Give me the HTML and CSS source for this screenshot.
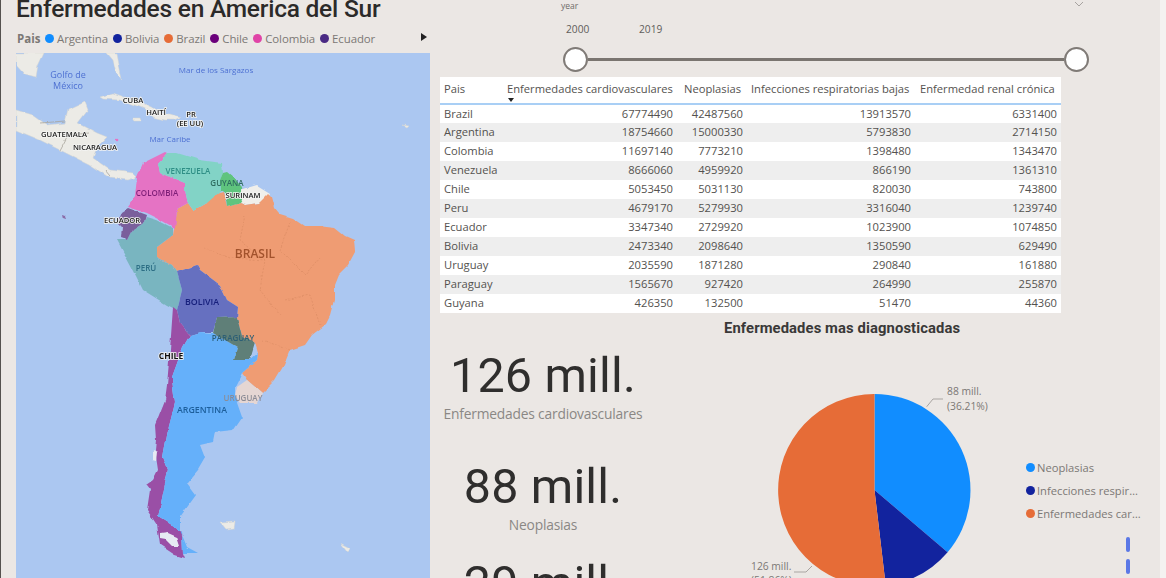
FILE: index.html
```html
<!DOCTYPE html>
<html lang="es">
<head>
<meta charset="utf-8">
<title>Enfermedades en America del Sur</title>
<link rel="stylesheet" href="styles.css">
</head>
<body>
<div class="report">
  <section class="left">
    <h1 class="title">Enfermedades en America del Sur</h1>
    <div class="map-legend">
      <b class="ml-head">Pais</b>
      <span class="ml-item"><i class="dot c-arg"></i>Argentina</span>
      <span class="ml-item"><i class="dot c-bol"></i>Bolivia</span>
      <span class="ml-item"><i class="dot c-bra"></i>Brazil</span>
      <span class="ml-item"><i class="dot c-chi"></i>Chile</span>
      <span class="ml-item"><i class="dot c-col"></i>Colombia</span>
      <span class="ml-item"><i class="dot c-ecu"></i>Ecuador</span>
      <i class="ml-next"></i>
    </div>
    <svg class="map" viewBox="16 53 414 525" xmlns="http://www.w3.org/2000/svg">
      <defs>
        <filter id="rough" x="0" y="0" width="100%" height="100%">
          <feTurbulence type="fractalNoise" baseFrequency="0.07" numOctaves="3" seed="4" result="n"/>
          <feDisplacementMap in="SourceGraphic" in2="n" scale="4" xChannelSelector="R" yChannelSelector="G"/>
        </filter>
      </defs>
      <rect x="16" y="53" width="414" height="525" class="sea"/>
      <g class="terrain">
      <rect x="16" y="53" width="414" height="525" class="sea"/>
      <g class="land">
        <polygon points="16,53 44,53 38,66 36,78 25,75 16,65"/>
        <polygon points="107,53 117,53 122,80 116,72 113,60"/>
        <polygon points="16,110 33,115 47,125 65,123 68,110 85,102 88,110 78,123 97,133 107,137 97,147 93,158 110,170 133,173 137,177 128,180 110,178 90,165 60,150 40,140 16,130"/>
        <polygon points="100,97 113,93 133,100 150,108 163,113 157,115 140,107 120,100 103,99"/>
        <polygon points="150,113 163,112 180,117 173,120 165,120 152,117"/>
        <polygon points="133,118 141,118 142,121 135,121"/>
        <polygon points="403,125 410,126 408,128"/>
        <polygon points="221,523 236,522 235,528 226,529"/>
        <polygon points="340,543 350,548 348,553"/>
      </g>
      <circle cx="117" cy="140" r="1.3" class="f-col"/>
      <polygon class="f-gal" points="63,214 66,215 67,219 64,218"/>
      <polygon class="f-sur" points="240,190 257,185 270,193 268,197 258,203 245,205 240,203"/>
      <polygon class="f-bra" points="177,210 188,204 193,211 207,203 203,197 223,192 227,207 240,203 245,205 258,203 268,193 272,197 275,208 280,214 293,218 305,226 318,226 335,228 345,236 354,240 355,252 348,265 338,275 334,285 334,300 330,315 325,325 312,335 305,345 290,350 284,365 275,380 262,393 247,380 242,373 257,360 258,353 255,343 242,337 237,317 238,307 227,300 220,285 200,270 197,265 177,272 172,265 157,257 157,247 173,235 175,223"/>
      <polygon class="f-col" points="165,152 167,153 158,163 160,173 185,183 185,190 188,204 177,210 175,228 157,218 147,213 128,207 135,197 137,177 143,163"/>
      <polygon class="f-ven" points="158,163 167,153 177,153 200,160 222,163 223,173 220,180 222,190 207,203 193,211 188,204 185,190 185,183 160,173"/>
      <polygon class="f-guy" points="227,172 233,177 242,187 242,200 240,203 227,207 225,193 220,190 220,180 223,173"/>
      <polygon class="f-per" points="147,217 157,220 173,228 173,235 157,247 157,257 172,265 177,272 182,290 177,310 167,305 143,290 133,270 117,240 128,240 133,230 145,222"/>
      <polygon class="f-ecu" points="128,208 147,215 145,222 133,230 128,240 122,238 123,227 118,222 122,212"/>
      <polygon class="f-bol" points="197,265 200,270 220,285 227,300 238,307 237,317 217,318 213,332 200,332 190,335 180,323 177,310 182,290 177,272"/>
      <polygon class="f-chi" points="173,307 177,310 180,323 190,335 183,347 172,377 172,380 175,403 168,430 163,457 168,470 158,517 182,532 183,553 185,558 175,555 160,545 157,525 147,510 150,490 146,485 153,480 158,470 155,450 156,440 155,425 165,400 167,385 170,350"/>
      <polygon class="f-arg" points="190,335 200,332 213,333 237,347 233,360 250,360 258,353 257,360 242,373 235,387 235,397 242,417 233,430 215,432 213,442 200,445 205,458 198,470 187,483 196,495 180,517 180,530 187,547 198,553 183,553 182,532 158,517 168,470 163,457 168,430 175,403 172,380 172,377 183,347"/>
      <polygon class="f-par" points="217,318 237,317 242,337 255,343 250,360 233,360 237,347 213,333"/>
      <polygon class="f-uru" points="237,387 247,380 262,393 257,403 240,403 235,397"/>
      <polygon class="f-ice" points="153,450 157,452 156,461 152,460"/>
      <polygon class="f-ice" points="160,534 168,533 177,537 180,546 172,546 166,540 160,539"/>
      <path class="prov" d="M245 215l-5 25 25 20-5 30 20 25M290 222l-10 28 25 25 15-18M265 260l-35-2-25-10M285 300l25-5 10 30M262 340l28 10"/>
      <path class="coast" d="M40 123l25-2M60 150l8-15 20-2M105 170l5 6"/>
      </g>
      <g class="sea-label">
        <text x="68" y="78">Golfo de</text>
        <text x="68" y="89">México</text>
        <text x="216" y="73" class="s8">Mar de los Sargazos</text>
        <text x="170" y="142" class="s8">Mar Caribe</text>
      </g>
      <g class="place">
        <text x="133" y="103">CUBA</text>
        <text x="156" y="115">HAITÍ</text>
        <text x="191" y="117">PR</text>
        <text x="190" y="126">(EE UU)</text>
        <text x="64" y="137">GUATEMALA</text>
        <text x="95" y="150">NICARAGUA</text>
        <text x="122" y="223">ECUADOR</text>
        <text x="243" y="198">SURINAM</text>
        <text x="171" y="359" class="chile">CHILE</text>
      </g>
      <g class="tint">
        <text x="188" y="174" class="t-ven">VENEZUELA</text>
        <text x="227" y="186" class="t-guy">GUYANA</text>
        <text x="157" y="196" class="t-col">COLOMBIA</text>
        <text x="255" y="258" class="t-bra">BRASIL</text>
        <text x="146" y="271" class="t-per">PERÚ</text>
        <text x="202" y="305" class="t-bol">BOLIVIA</text>
        <text x="233" y="341" class="t-par">PARAGUAY</text>
        <text x="202" y="413" class="t-arg">ARGENTINA</text>
        <text x="243" y="401" class="t-uru">URUGUAY</text>
      </g>
    </svg>
  </section>

  <section class="right">
    <div class="slicer">
      <div class="slicer-head"><span class="slicer-name">year</span>
        <svg class="chev" viewBox="0 0 10 6"><polyline points="1,1 5,5 9,1"/></svg>
      </div>
      <div class="range"><span>2000</span><span>2019</span></div>
      <div class="slider"><i class="knob"></i><i class="rail"></i><i class="knob"></i></div>
    </div>

    <table class="grid-table">
      <colgroup><col class="k1"><col class="k2"><col class="k3"><col class="k4"><col class="k5"></colgroup>
      <thead>
        <tr><th>Pais</th><th class="sorted">Enfermedades cardiovasculares</th><th class="th-neo">Neoplasias</th><th>Infecciones respiratorias bajas</th><th class="th-renal">Enfermedad renal crónica</th></tr>
      </thead>
      <tbody>
        <tr><td>Brazil</td><td>67774490</td><td>42487560</td><td>13913570</td><td>6331400</td></tr>
        <tr><td>Argentina</td><td>18754660</td><td>15000330</td><td>5793830</td><td>2714150</td></tr>
        <tr><td>Colombia</td><td>11697140</td><td>7773210</td><td>1398480</td><td>1343470</td></tr>
        <tr><td>Venezuela</td><td>8666060</td><td>4959920</td><td>866190</td><td>1361310</td></tr>
        <tr><td>Chile</td><td>5053450</td><td>5031130</td><td>820030</td><td>743800</td></tr>
        <tr><td>Peru</td><td>4679170</td><td>5279930</td><td>3316040</td><td>1239740</td></tr>
        <tr><td>Ecuador</td><td>3347340</td><td>2729920</td><td>1023900</td><td>1074850</td></tr>
        <tr><td>Bolivia</td><td>2473340</td><td>2098640</td><td>1350590</td><td>629490</td></tr>
        <tr><td>Uruguay</td><td>2035590</td><td>1871280</td><td>290840</td><td>161880</td></tr>
        <tr><td>Paraguay</td><td>1565670</td><td>927420</td><td>264990</td><td>255870</td></tr>
        <tr><td>Guyana</td><td>426350</td><td>132500</td><td>51470</td><td>44360</td></tr>
      </tbody>
    </table>

    <div class="lower">
      <div class="cards">
        <div class="card"><div class="kpi">126 mill.</div><div class="kpi-label">Enfermedades cardiovasculares</div></div>
        <div class="card card-short"><div class="kpi">88 mill.</div><div class="kpi-label">Neoplasias</div></div>
        <div class="card"><div class="kpi">29 mill.</div><div class="kpi-label">Infecciones respiratorias bajas</div></div>
      </div>
      <div class="chart">
        <h2 class="chart-title">Enfermedades mas diagnosticadas</h2>
        <div class="chart-body">
          <svg class="pie" viewBox="745 340 280 238" xmlns="http://www.w3.org/2000/svg">
            <path class="s-blue" d="M874.5 490V394A96 96 0 0 1 947.6 552.2Z"/>
            <path class="s-navy" d="M874.5 490L947.6 552.2A96 96 0 0 1 885.7 585.3Z"/>
            <path class="s-orange" d="M874.5 490L885.7 585.3A96 96 0 1 1 874.5 394Z"/>
            <polyline class="leader" points="926.7,406.7 933,399 943,399"/>
            <polyline class="leader" points="794,572 806,572 812,566"/>
            <text class="pie-label" x="947" y="395">88 mill.</text>
            <text class="pie-label" x="947" y="410">(36.21%)</text>
            <text class="pie-label" x="751" y="570">126 mill.</text>
            <text class="pie-label" x="751" y="584">(51.86%)</text>
          </svg>
          <ul class="pie-legend">
            <li><i class="dot c-bra2"></i><span>Neoplasias</span></li>
            <li><i class="dot c-bol"></i><span>Infecciones respiratorias bajas</span></li>
            <li><i class="dot c-bra"></i><span>Enfermedades cardiovasculares</span></li>
          </ul>
          <div class="pager"><i></i><i></i></div>
        </div>
      </div>
    </div>
  </section>
</div>
</body>
</html>
```

FILE: styles.css
```css
* { box-sizing: border-box; }
html, body { margin: 0; height: 100%; overflow: hidden; }
body { background: #f4f2f1; font-family: "Open Sans", "Noto Sans", sans-serif; color: #605e5c; }

.report {
  width: 1160px;
  height: 578px;
  background: #ebe7e4;
  border-left: 1px solid #55514e;
  display: flex;
  overflow: hidden;
}

/* left */
.left { width: 414px; margin-left: 15px; flex: none; display: flex; flex-direction: column; }
.title {
  margin: 0;
  height: 21px;
  font: 500 24.5px/18px "Roboto", sans-serif;
  letter-spacing: -.23px;
  color: #2b2a29;
  white-space: nowrap;
}
.map-legend {
  display: flex;
  align-items: center;
  height: 32px;
  padding: 2px 0 0 1px;
  font-size: 11.45px;
  color: #7b7875;
  position: relative;
}
.ml-head { font: 700 11.5px "Open Sans", sans-serif; width: 28px; }
.ml-item { display: flex; align-items: center; margin-right: 5px; letter-spacing: -.1px; }
.ml-next {
  position: absolute;
  right: 3px;
  top: 12px;
  border-left: 6px solid #222;
  border-top: 4.5px solid transparent;
  border-bottom: 4.5px solid transparent;
}
.dot { display: inline-block; width: 9px; height: 9px; border-radius: 50%; margin-right: 3px; flex: none; }
.c-arg, .c-bra2 { background: #118dff; }
.c-bol { background: #12239e; }
.c-bra { background: #e66c37; }
.c-chi { background: #6b007b; }
.c-col { background: #e044a7; }
.c-ecu { background: #4a2a84; }

.map { display: block; width: 414px; height: 525px; filter: blur(.4px); }
.terrain { filter: url(#rough); }
.sea { fill: #abc7f1; }
.land polygon { fill: #ecebe6; stroke: #d8d6cf; stroke-width: .5; }
.f-bra { fill: #ef9c73; } .f-col { fill: #e573c4; } .f-ven { fill: #82d3c6; }
.f-guy { fill: #5fc47e; } .f-sur { fill: #f0efeb; } .f-per { fill: #79b5c0; }
.f-ecu { fill: #7a5f9c; } .f-bol { fill: #6670c0; } .f-par { fill: #5f7f78; }
.f-arg { fill: #65b0fa; } .f-chi { fill: #9a4fa6; } .f-uru { fill: #e5d6d3; }
.f-gal { fill: #8a6ca8; }
.f-ice { fill: #e6eaf3; }
.prov { fill: none; stroke: #d98a62; stroke-width: .6; stroke-dasharray: 2 1.5; }
.coast { fill: none; stroke: #a8a59c; stroke-width: .8; }
.map text { font-family: "Open Sans", sans-serif; text-anchor: middle; }
.sea-label text { font-size: 9px; fill: #4d70d2; }
.sea-label .s8 { font-size: 8px; }
.place text {
  font-size: 7.6px;
  font-weight: 600;
  fill: #222;
  stroke: #f4f4f2;
  stroke-width: 1.6px;
  paint-order: stroke;
}
.place .chile { font-size: 8.5px; font-weight: 700; fill: #111; }
.tint text { font-size: 8px; font-weight: 600; }
.t-ven { fill: #2f8f86; } .t-guy { fill: #2f6d62; } .t-col { fill: #7f1f78; }
.t-bra { fill: #a2522c; font-size: 12px !important; } .t-per { fill: #2d6f85; }
.t-bol { fill: #17207c; font-size: 8.8px !important; } .t-par { fill: #2c5f75; }
.t-arg { fill: #1d5f9c; font-size: 8.8px !important; } .t-uru { fill: #8c8c96; }

/* right */
.right { flex: none; width: 730px; padding-left: 10px; display: flex; flex-direction: column; }
.slicer { height: 77px; padding-left: 121px; flex: none; }
.slicer-head { display: flex; justify-content: space-between; height: 11px; padding-right: 76px; }
.slicer-name { font-size: 8.5px; line-height: 11px; color: #6f6c69; }
.chev { width: 10px; height: 6px; fill: none; stroke: #a7a3a0; stroke-width: 1; margin-top: 1px; }
.range { display: flex; gap: 49px; font-size: 10.2px; line-height: 14px; padding: 11px 0 0 5px; color: #5f5d5b; height: 25px; }
.range span { width: 24px; }
.slider { display: flex; align-items: center; width: 526px; margin: 11px 0 0 2px; }
.rail { flex: 1; height: 3px; background: #7a7570; }
.knob { width: 25px; height: 25px; border-radius: 50%; background: #fff; border: 2px solid #807b77; flex: none; }

.grid-table {
  border-collapse: collapse;
  table-layout: fixed;
  width: 621px;
  flex: none;
  font-size: 11.2px;
  color: #54524f;
  background: #fff;
}
.k1 { width: 63px; } .k2 { width: 174px; } .k3 { width: 70px; } .k4 { width: 168px; } .k5 { width: 146px; }
.grid-table th {
  height: 27px;
  font-weight: 400;
  text-align: left;
  padding: 0 4px 4px;
  white-space: nowrap;
  overflow: hidden;
  border-bottom: 2px solid #a9cff5;
  vertical-align: middle;
  position: relative;
}
.grid-table .th-neo { padding-left: 7px; }
.grid-table .th-renal { padding-left: 5px; }
.sorted::after {
  content: "";
  position: absolute;
  left: 5px;
  bottom: 1px;
  border-top: 4px solid #222;
  border-left: 3.5px solid transparent;
  border-right: 3.5px solid transparent;
}
.grid-table td { height: 19px; padding: 0 4px; text-align: right; line-height: 18px; vertical-align: top; white-space: nowrap; }
.grid-table td:first-child { text-align: left; }
.grid-table tbody tr:nth-child(even) { background: #eeeeee; }

.lower { display: flex; flex: 1; min-height: 0; }
.cards { width: 206px; flex: none; display: flex; flex-direction: column; align-items: center; padding-top: 37px; overflow: hidden; }
.card { text-align: center; height: 111px; flex: none; }
.card-short { height: 97px; }
.kpi { font: 400 48.4px/52px "Roboto", sans-serif; color: #2f2e2d; letter-spacing: .2px; white-space: nowrap; }
.kpi-label { font-size: 13.8px; line-height: 20px; margin-top: 2px; color: #8a8784; white-space: nowrap; letter-spacing: -.2px; }

.chart { flex: 1; min-width: 0; display: flex; flex-direction: column; }
.chart-title { margin: 7px 0 0; font: 700 14.8px/17px "Roboto", sans-serif; color: #3a3938; height: 19px; padding-left: 78px; letter-spacing: .1px; white-space: nowrap; }
.chart-body { display: flex; position: relative; }
.pie { width: 280px; height: 238px; flex: none; margin-left: 99px; margin-top: 1px; }
.s-blue { fill: #118dff; } .s-navy { fill: #12239e; } .s-orange { fill: #e66c37; }
.leader { fill: none; stroke: #a9a5a2; stroke-width: 1; }
.pie-label { font: 10.3px "Open Sans", sans-serif; fill: #7b7875; }
.pie-legend { list-style: none; margin: 117px 0 0 1px; padding: 0; width: 118px; font-size: 11.2px; color: #7b7875; }
.pie-legend li { display: flex; align-items: center; height: 23px; }
.pie-legend .dot { margin-right: 2px; }
.pie-legend span { overflow: hidden; text-overflow: ellipsis; white-space: nowrap; flex: 1; }
.pager { position: absolute; left: 480px; top: 198px; display: flex; flex-direction: column; gap: 7px; }
.pager i { display: block; width: 4px; height: 15px; border-radius: 2px; background: #5b78e6; }
```
